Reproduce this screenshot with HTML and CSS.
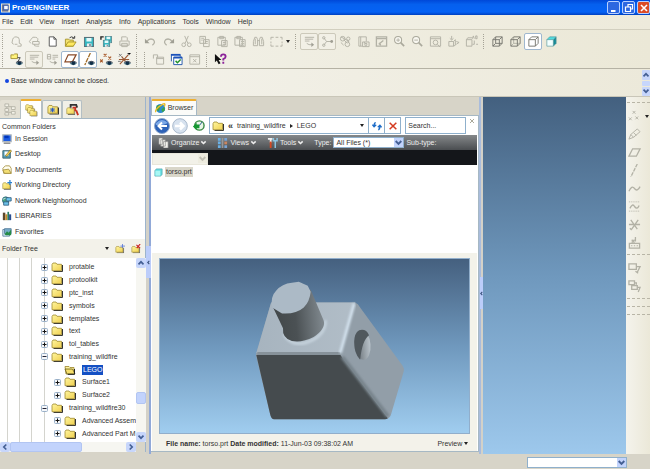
FILE: index.html
```
<!DOCTYPE html>
<html lang="en">
<head>
<meta charset="utf-8">
<title>Pro/ENGINEER</title>
<link rel="stylesheet" href="styles.css">
</head>
<body>
<svg class="defs" aria-hidden="true">
  <defs>
    <linearGradient id="gold" x1="0" y1="0" x2="1" y2="1"><stop offset="0" stop-color="#fff6a0"/><stop offset="1" stop-color="#f0d050"/></linearGradient>
    <symbol id="folder" viewBox="0 0 12 10"><path d="M2.5 9.5H11.5V3" fill="none" stroke="#333" stroke-width="1"/><path d="M1 2.5L2 1H5L6 2.3H10.5V8.7H1Z" fill="url(#gold)" stroke="#a08a30" stroke-width=".8"/></symbol>
    <symbol id="folder-open" viewBox="0 0 12 10"><path d="M1 1.5H5L6 2.5H10V9H2Z" fill="#fff3a0" stroke="#99842c" stroke-width=".8"/><path d="M1 4H8.5L11 9H3Z" fill="#f6df6c" stroke="#665818" stroke-width=".8"/><path d="M10.5 4V9.3H4" fill="none" stroke="#222"/></symbol>
    <symbol id="plus" viewBox="0 0 7 7"><rect x=".5" y=".5" width="6" height="6" rx="1" fill="#f5f7fa" stroke="#9ab0c8"/><path d="M1.5 3.5H5.5M3.5 1.5V5.5" stroke="#111"/></symbol>
    <symbol id="minus" viewBox="0 0 7 7"><rect x=".5" y=".5" width="6" height="6" rx="1" fill="#f5f7fa" stroke="#9ab0c8"/><path d="M1.5 3.5H5.5" stroke="#223"/></symbol>
    <symbol id="chev" viewBox="0 0 8 8"><path d="M1.5 2.7L4 5.2L6.5 2.7" fill="none" stroke="currentColor" stroke-width="1.7"/></symbol>
    <symbol id="eye" viewBox="0 0 7 5"><path d="M0 2.8Q3.5-1.5 7 2.8Q3.5 6 0 2.8Z" fill="#7296a0"/><circle cx="3.6" cy="2.6" r="1.7" fill="#102e48"/><path d="M.3 1.8Q3.5-.8 6.7 1.8" fill="none" stroke="#223" stroke-width=".7"/></symbol>
    <symbol id="mag" viewBox="0 0 14 14"><circle cx="5.5" cy="5.5" r="3.8" fill="#f8f7f0" stroke="#aaa99c" stroke-width="1.1"/><path d="M8.3 8.3L12 12" stroke="#aaa99c" stroke-width="1.8"/></symbol>
    <symbol id="floppy" viewBox="0 0 10 10"><path d="M.5.5H9.5V9.5H.5Z" fill="#36b6c0" stroke="#57727a"/><path d="M2.5 1H7.5V4.5H2.5Z" fill="#e6fafa"/><path d="M3 6.5H7.5V9.5H3Z" fill="#f0f0f0"/><path d="M6 7V9" stroke="#345"/></symbol>
  </defs>
</svg>

<header class="titlebar">
  <svg class="app-icon" viewBox="0 0 10 10"><rect width="10" height="10" fill="#ece7d4"/><rect x="1" y="1" width="7" height="8" fill="#6e7898"/><rect x="3" y="2" width="5" height="5" fill="#f7f8ff" stroke="#3153a6"/></svg>
  <h1>Pro/ENGINEER</h1>
  <div class="win-buttons">
    <button aria-label="Minimize"><svg viewBox="0 0 12 12"><path d="M3 9H7.500" stroke="#fff" stroke-width="2"/></svg></button>
    <button aria-label="Restore"><svg viewBox="0 0 12 12"><path d="M5 4.500V2.500H9.500V7H8M2.500 5H7.500V9.500H2.500Z" fill="none" stroke="#fff" stroke-width="1.200"/></svg></button>
    <button class="close" aria-label="Close"><svg viewBox="0 0 12 12"><path d="M3 3L9 9M9 3L3 9" stroke="#fff" stroke-width="1.600"/></svg></button>
  </div>
</header>

<nav class="menubar">
  <button>File</button><button>Edit</button><button>View</button><button>Insert</button><button>Analysis</button><button>Info</button><button>Applications</button><button>Tools</button><button>Window</button><button>Help</button>
</nav>

<section class="toolbars">
  <div class="toolrow">
    <i class="grip"></i>
    <div class="group">
      <button aria-label="Erase"><svg viewBox="0 0 14 14"><path d="M4 10Q1 9 2.500 6.500Q3 2 6.500 2Q10 2 10 5V9M10 9Q13 9 12 12H8M5 10H8" class="g"/></svg></button>
      <button aria-label="Erase hidden"><svg viewBox="0 0 14 14"><path d="M3 9Q0 7 3 5Q5 1 8 2.500Q12 3 10 7M5 7H12V10H5ZM7 10Q6 12 9 12H12" class="g"/></svg></button>
      <button aria-label="New"><svg viewBox="0 0 14 14"><path d="M3.500 2H8.500L11 4.500V12H3.500ZM8.500 2V4.500H11" fill="#fff" stroke="#555"/></svg></button>
      <button aria-label="Open"><svg viewBox="0 0 14 14"><path d="M1.500 4.500H5L6 5.500H10V12H1.500Z" fill="#f4e370" stroke="#a8942c"/><path d="M1.500 12L4.500 7.500H13L10 12Z" fill="#ffea60" stroke="#a8942c"/><path d="M6 3Q8 1 10.500 3M9 3.500H11.500V1" fill="none" stroke="#333"/></svg></button>
      <button aria-label="Save"><svg viewBox="0 0 14 14"><use href="#floppy" x="2" y="2" width="11" height="11"/></svg></button>
      <button aria-label="Save a copy"><svg viewBox="0 0 14 14"><use href="#floppy" x="5" y="1" width="8" height="8"/><use href="#floppy" x="3" y="5" width="8" height="8"/><path d="M1 5V2H4" fill="none" stroke="#222" stroke-width="1.500"/></svg></button>
      <button aria-label="Print"><svg viewBox="0 0 14 14"><path d="M4 6V2H9L10 3V6M2 6.500H12V11H2ZM4 9H10V12.500H4Z" class="g"/></svg></button>
    </div>
    <i class="grip"></i>
    <div class="group">
      <button aria-label="Undo"><svg viewBox="0 0 14 14"><path d="M3 7Q6 3 10 5Q13 8 9 11" class="g b"/><path d="M1 4V9H6Z" fill="#a09f94"/></svg></button>
      <button aria-label="Redo"><svg viewBox="0 0 14 14"><path d="M11 7Q8 3 4 5Q1 8 5 11" class="g b"/><path d="M13 4V9H8Z" fill="#a09f94"/></svg></button>
      <button aria-label="Cut"><svg viewBox="0 0 14 14"><path d="M5 1L8.500 9M9 1L5.500 9" class="g"/><circle cx="4" cy="10.500" r="2" class="g"/><circle cx="10" cy="10.500" r="2" class="g"/></svg></button>
      <button aria-label="Copy"><svg viewBox="0 0 14 14"><path d="M2 1.500H8V9H2ZM6 5H12V12.500H6ZM7.500 7H10.500M7.500 9H10.500M3.500 3.500H6.500M3.500 5.500H5" class="g"/></svg></button>
      <button aria-label="Paste"><svg viewBox="0 0 14 14"><path d="M2 2.500H10V11H2ZM4 1.500H8V4H4ZM6 6H12V12.500H6ZM7.500 8H10.500M7.500 10H10.500" class="g"/></svg></button>
      <button aria-label="Paste special"><svg viewBox="0 0 14 14"><path d="M1 2.500H9V11H1ZM3 1.500H7V4H3ZM6 5H12V12.500H6ZM7.500 7H8.500M9.500 7H11M7.500 9H8.500M9.500 9H11M7.500 11H11" class="g"/></svg></button>
      <button aria-label="Find"><svg viewBox="0 0 14 14"><path d="M3 2.500H5L6 5V11.500H1.500V7ZM9 2.500H11L12.500 7V11.500H8V5ZM6 6H8M3.500 4V10M10.500 4V10" class="g"/></svg></button>
      <button aria-label="Select"><svg viewBox="0 0 14 14"><path d="M1 5V2.500H4M6 2.500H9M11 2.500H13V5M13 7V9M13 10V12H11M9 12H6M4 12H1V10M1 9V7" class="g"/></svg></button>
      <button class="tiny" aria-label="Select options"><i class="tri"></i></button>
    </div>
    <i class="grip"></i>
    <div class="group">
      <button class="pressed dim" aria-label="Annotations"><svg viewBox="0 0 14 14"><path d="M2 2.500H12M2 4.500H11M2 6.500H7M4 9Q6 11 10 10.500" class="g"/><path d="M9 8L12 10.500L9 13Z" fill="#a09f94"/></svg></button>
      <button class="pressed dim" aria-label="Spin center"><svg viewBox="0 0 14 14"><path d="M3 3L6 7L3 11M6 7H11" class="g"/><circle cx="3" cy="3" r="1.300" class="g"/><circle cx="3" cy="11" r="1.300" class="g"/><circle cx="11.500" cy="7" r="1.500" fill="#a09f94"/></svg></button>
      <button aria-label="Orient mode"><svg viewBox="0 0 14 14"><circle cx="4" cy="4" r="2.500" class="g"/><circle cx="10" cy="4" r="1.800" class="g"/><circle cx="9" cy="10" r="2.500" class="g"/><path d="M2 8L5 11M5 5L9 9M10 6V8M2 2L11 7" class="g"/></svg></button>
      <button aria-label="Layers"><svg viewBox="0 0 14 14"><path d="M2 2H10V7M2 2V12H6M4 2V12M6 7.500H13V12.500H6ZM8 7.500V9H11" class="g"/><circle cx="9.500" cy="10.500" r="1.200" class="g"/></svg></button>
      <button aria-label="Redraw"><svg viewBox="0 0 14 14"><path d="M1.500 2H12.500V12H1.500ZM1.500 4H12.500M4 10L9 6M6 11L5 8" class="g b"/></svg></button>
      <button aria-label="Zoom in"><svg viewBox="0 0 14 14"><use href="#mag" width="14" height="14"/><path d="M3.500 5.500H7.500M5.500 3.500V7.500" class="g"/></svg></button>
      <button aria-label="Zoom out"><svg viewBox="0 0 14 14"><use href="#mag" width="14" height="14"/><path d="M3.500 5.500H7.500" class="g"/></svg></button>
      <button aria-label="Refit"><svg viewBox="0 0 14 14"><path d="M1.500 2H12.500V12H1.500ZM1.500 4H12.500M9 10L12 13" class="g"/><circle cx="7" cy="8" r="2.500" class="g"/></svg></button>
      <button aria-label="Reorient"><svg viewBox="0 0 14 14"><path d="M5 1V5M3 3.500L5 5.500L7 3.500M2 7H7V12H2ZM7 7L9 5M9 5V11L7 12M10 7L13 8L10 10" class="g"/></svg></button>
      <button aria-label="Saved views"><svg viewBox="0 0 14 14"><path d="M1.500 5H7.500V12H1.500ZM1.500 5L3 3H8M8 4L9 1L10 4M11.500 1H13V4H11.500ZM10 6V10H8M12 10H14" class="g"/></svg></button>
    </div>
    <i class="grip"></i>
    <div class="group">
      <button aria-label="Wireframe"><svg viewBox="0 0 14 14"><path d="M2 5H9V12H2ZM5 2H12V9H5ZM2 5L5 2M9 5L12 2M9 12L12 9M2 12L5 9" class="k"/></svg></button>
      <button aria-label="Hidden line"><svg viewBox="0 0 14 14"><path d="M5 2V9H12M2 12L5 9" class="g"/><path d="M2 5H9V12H2ZM2 5L5 2H12V9L9 12M9 5L12 2" class="k"/></svg></button>
      <button class="pressed" aria-label="No hidden"><svg viewBox="0 0 14 14"><path d="M2 5H9V12H2ZM2 5L5 2H12V9L9 12M9 5L12 2" class="k"/></svg></button>
      <button aria-label="Shading"><svg viewBox="0 0 14 14"><path d="M2 5H9V12H2Z" fill="#f2ffff"/><path d="M2 5L5 2H12L9 5Z" fill="#50dce0"/><path d="M9 5L12 2V9L9 12Z" fill="#168b96"/><path d="M2 5H9V12H2ZM2 5L5 2H12V9L9 12M9 5L12 2" fill="none" stroke="#57999d" stroke-width=".7"/></svg></button>
    </div>
  </div>
  <div class="toolrow">
    <i class="grip"></i>
    <div class="group">
      <button aria-label="Layer tree"><svg viewBox="0 0 14 14"><path d="M1 2H4L5 1H8V6H1Z" fill="#fff37b" stroke="#a59336"/><path d="M8 5H11L8 10" fill="none" stroke="#444"/><use href="#eye" x="6" y="8" width="8" height="6"/></svg></button>
      <button class="pressed dim" aria-label="Notes"><svg viewBox="0 0 14 14"><path d="M2 2.500H12M2 4.500H11M2 6.500H7M4 9Q6 11 10 10.500" class="g"/><path d="M9 8L12 10.500L9 13Z" fill="#a09f94"/></svg></button>
      <button aria-label="Tags"><svg viewBox="0 0 14 14"><path d="M1.500 1.500H5V6.500H1.500ZM1.500 4H5M7 2.500H13M7 4.500H13M7 6.500H10M4 9Q6 11 10 10.500" class="g"/><path d="M9 8L12 10.500L9 13Z" fill="#a09f94"/></svg></button>
      <button class="pressed" aria-label="Datum planes"><svg viewBox="0 0 14 14"><path d="M4.500 2H13L9 9.500H1Z" fill="none" stroke="#8a4b28" stroke-width="1.300"/><use href="#eye" x="6" y="8" width="8" height="6"/></svg></button>
      <button class="pressed" aria-label="Datum axes"><svg viewBox="0 0 14 14"><path d="M9 0L3 13" stroke="#a16c27" stroke-width="1.400" stroke-dasharray="5 1"/><use href="#eye" x="6" y="8" width="8" height="6"/></svg></button>
      <button aria-label="Datum points"><svg viewBox="0 0 14 14"><path d="M4 1L7 4M7 1L4 4M0 7L3 10M3 7L0 10M9 4L12 7M12 4L9 7" stroke="#a85a2a" stroke-width="1.200"/><use href="#eye" x="6" y="8" width="8" height="6"/></svg></button>
      <button aria-label="Coordinate systems"><svg viewBox="0 0 14 14"><path d="M1 7H12M2 12L11 2M4 4L8 9" stroke="#9b5732" stroke-width="1.200"/><path d="M1 1L4 4M4 1L1 4M10 0L12 2L14 0M0 9H3" stroke="#777"/><use href="#eye" x="6" y="8" width="8" height="6"/></svg></button>
    </div>
    <i class="grip"></i><i class="grip"></i>
    <div class="group">
      <button aria-label="New window"><svg viewBox="0 0 14 14"><path d="M1.500 6V2H6V5M5 4.500H12.500V12H5ZM5 6H12.500" class="g"/></svg></button>
      <button aria-label="Activate window"><svg viewBox="0 0 14 14"><path d="M1.500 9V1.500H11V4M4 4.500H13V12.500H4Z" fill="#fff" stroke="#2255aa"/><path d="M1 2H11M4 5H13" stroke="#1b52ba" stroke-width="2"/><path d="M6 8.500L8 10.500L11.500 7" fill="none" stroke="#24932c" stroke-width="1.600"/></svg></button>
      <button aria-label="Close window"><svg viewBox="0 0 14 14"><path d="M2 2H12.500V12H2ZM2 4H12.500M5.500 6.500L9 10M9 6.500L5.500 10" class="g"/></svg></button>
    </div>
    <i class="grip"></i>
    <div class="group">
      <button aria-label="Context help"><svg viewBox="0 0 14 14"><path d="M1 1V10L3 8L5 12L7 11L5 7.500H8Z" fill="#111"/><path d="M7.500 4Q7.500 1.500 10 1.500Q12.500 1.500 12.500 4Q12.500 5.500 10 6.500V8M10 9.500V11.500" fill="none" stroke="#8b2399" stroke-width="2"/></svg></button>
    </div>
  </div>
</section>

<section class="message">
  <p><i></i>Base window cannot be closed.</p>
  <div class="spin">
    <button aria-label="Scroll up"><svg class="flip" viewBox="0 0 8 8"><use href="#chev"/></svg></button>
    <i></i>
    <button aria-label="Scroll down"><svg viewBox="0 0 8 8"><use href="#chev"/></svg></button>
  </div>
</section>

<main class="workspace">
  <aside class="navigator">
    <div class="tabs">
      <button aria-label="Model tree" class="off"><svg viewBox="0 0 14 14"><path d="M3 2V12M3 4H9M3 10H9" class="g"/><path d="M1 1H5V4H1ZM1 6H5V9H1ZM1 10.500H5V13H1ZM8 4H12V7H8ZM8 9H12V12H8Z" fill="#f4f2e8" stroke="#b5b4a9"/></svg></button>
      <button aria-label="Folder browser" class="active"><svg viewBox="0 0 14 14"><use href="#folder" width="9" height="7.500"/><use href="#folder" x="2" y="3" width="9" height="7.500"/><use href="#folder" x="4.500" y="6" width="9" height="7.500"/></svg></button>
      <button aria-label="Favorites"><svg viewBox="0 0 14 14"><use href="#folder" x="1" y="1" width="13" height="12"/><path d="M7 5V10M4.500 7.500H9.500M5 5.500L9 9.500M9 5.500L5 9.500" stroke="#2455c4"/></svg></button>
      <button aria-label="Connections"><svg viewBox="0 0 14 14"><use href="#folder" y="4" width="10" height="9"/><path d="M4 2H11L12 5M5 2V5" fill="none" stroke="#333" stroke-width="2"/><path d="M7 5H10V9M11 8L13 13" stroke="#c93020" fill="none" stroke-width="2"/></svg></button>
    </div>
    <div class="common">
      <h2>Common Folders</h2>
      <ul>
        <li><svg viewBox="0 0 12 12"><path d="M1 1H11V9H1Z" fill="#1b5ce4" stroke="#aeb6bd" stroke-width="1.500"/><path d="M3 2H8V5H3Z" fill="#0034ba"/><path d="M2 11H10" stroke="#777" stroke-width="1.500"/></svg><a href="#">In Session</a></li>
        <li><svg viewBox="0 0 12 12"><path d="M1 2H10V11H1Z" fill="#539db8" stroke="#345d68"/><path d="M3 3H8V8H3Z" fill="#fff"/><path d="M4 8L10 1L11.500 2.500L6 9Z" fill="#efcf50" stroke="#6d5b23" stroke-width=".7"/></svg><a href="#">Desktop</a></li>
        <li><svg viewBox="0 0 12 12"><path d="M1 4L4 1H9L11 4V10H2Z" fill="#fffef0" stroke="#a48e3d"/><path d="M1 6L8 5L11 10H3Z" fill="#f3df75" stroke="#a48e3d"/></svg><a href="#">My Documents</a></li>
        <li><svg viewBox="0 0 12 12"><use href="#folder" y="2" width="11" height="10"/><path d="M9.500 0V6M6.500 3H12" stroke="#2880d0" stroke-width="1.500"/></svg><a href="#">Working Directory</a></li>
        <li><svg viewBox="0 0 12 12"><circle cx="4.500" cy="5" r="4" fill="#4ba77c" stroke="#326a88"/><path d="M1 4Q4 1 7 5" fill="none" stroke="#d6ecf8"/><path d="M5 2H11V6H5ZM2 7H8V11H2Z" fill="#6bc3eb" stroke="#315b7e"/></svg><a href="#">Network Neighborhood</a></li>
        <li><svg viewBox="0 0 12 12"><path d="M1 2H4V11H1Z" fill="#5b482d"/><path d="M4 4H6.500V11H4Z" fill="#c78b2b"/><path d="M6.500 1H8.500V11H6.500Z" fill="#2b7b61"/><path d="M8.500 4H11V11H8.500Z" fill="#294d92"/></svg><a href="#">LIBRARIES</a></li>
        <li><svg viewBox="0 0 12 12"><path d="M1 3H9V11H1Z" fill="#d9eef5" stroke="#567b9a"/><path d="M3 2H11V8H3Z" fill="#76abc9" stroke="#567b9a"/><path d="M3 9L6 5L8 7L11 3V10H5Z" fill="#258c46"/></svg><a href="#">Favorites</a></li>
      </ul>
    </div>
    <div class="treehead">
      <h2>Folder Tree</h2>
      <button aria-label="Tree options"><i class="tri"></i></button>
      <button aria-label="New folder"><svg viewBox="0 0 12 12"><use href="#folder" y="2" width="11" height="9"/><path d="M9 0V5M6.500 2.500H12" stroke="#5a7ad8"/></svg></button>
      <button aria-label="Delete folder"><svg viewBox="0 0 12 12"><use href="#folder" y="2" width="11" height="9"/><path d="M6.500 1L11 5M11 0L7 5" stroke="#cc2222" stroke-width="1.400"/></svg></button>
    </div>
    <div class="treebox">
      <ul class="tree">
        <li><svg class="ex"><use href="#plus"/></svg><svg class="fo"><use href="#folder"/></svg><span>protable</span></li>
        <li><svg class="ex"><use href="#plus"/></svg><svg class="fo"><use href="#folder"/></svg><span>protoolkit</span></li>
        <li><svg class="ex"><use href="#plus"/></svg><svg class="fo"><use href="#folder"/></svg><span>ptc_inst</span></li>
        <li><svg class="ex"><use href="#plus"/></svg><svg class="fo"><use href="#folder"/></svg><span>symbols</span></li>
        <li><svg class="ex"><use href="#plus"/></svg><svg class="fo"><use href="#folder"/></svg><span>templates</span></li>
        <li><svg class="ex"><use href="#plus"/></svg><svg class="fo"><use href="#folder"/></svg><span>text</span></li>
        <li><svg class="ex"><use href="#plus"/></svg><svg class="fo"><use href="#folder"/></svg><span>tol_tables</span></li>
        <li><svg class="ex"><use href="#minus"/></svg><svg class="fo"><use href="#folder"/></svg><span>training_wildfire</span></li>
        <li class="sub"><i class="ex"></i><svg class="fo"><use href="#folder-open"/></svg><span class="selected">LEGO</span></li>
        <li class="sub"><svg class="ex"><use href="#plus"/></svg><svg class="fo"><use href="#folder"/></svg><span>Surface1</span></li>
        <li class="sub"><svg class="ex"><use href="#plus"/></svg><svg class="fo"><use href="#folder"/></svg><span>Surface2</span></li>
        <li><svg class="ex"><use href="#minus"/></svg><svg class="fo"><use href="#folder"/></svg><span>training_wildfire30</span></li>
        <li class="sub"><svg class="ex"><use href="#plus"/></svg><svg class="fo"><use href="#folder"/></svg><span>Advanced Assem</span></li>
        <li class="sub"><svg class="ex"><use href="#plus"/></svg><svg class="fo"><use href="#folder"/></svg><span>Advanced Part M</span></li>
      </ul>
      <div class="vscroll">
        <button aria-label="Tree up"><svg class="flip" viewBox="0 0 8 8"><use href="#chev"/></svg></button>
        <i class="thumb"></i>
        <button aria-label="Tree down"><svg viewBox="0 0 8 8"><use href="#chev"/></svg></button>
      </div>
      <div class="hscroll">
        <button aria-label="Tree left"><svg class="left" viewBox="0 0 8 8"><use href="#chev"/></svg></button>
        <i class="thumb"></i>
        <button aria-label="Tree right"><svg class="right" viewBox="0 0 8 8"><use href="#chev"/></svg></button>
      </div>
    </div>
  </aside>

  <div class="sash"><button aria-label="Collapse navigator"><svg class="left" viewBox="0 0 8 8"><use href="#chev"/></svg></button></div>

  <section class="browser">
    <div class="browser-tabs">
      <button><svg viewBox="0 0 12 12"><circle cx="6" cy="6" r="5" fill="#2b8bd0"/><path d="M2 3Q5 1 6 4L4 9Q0 8 2 3ZM7 7L10 4L11 8L8 10Z" fill="#3ca14c"/><path d="M1 10Q-1 7 9 1Q12 0 10 4" fill="none" stroke="#e8bb28" stroke-width="1.500"/></svg>Browser</button>
    </div>
    <div class="frame">
      <div class="address">
        <button class="nav" aria-label="Back"><svg viewBox="0 0 16 16"><circle cx="8" cy="8" r="7.500" fill="#2d62b8" stroke="#90a8cc"/><path d="M2 5Q8-1 14 5Q8 8 2 7Z" fill="#7ba7e6"/><path d="M13 8H5M8 4.500L4.500 8L8 11.500" fill="none" stroke="#fff" stroke-width="2"/></svg></button>
        <button class="nav" aria-label="Forward"><svg viewBox="0 0 16 16"><circle cx="8" cy="8" r="7.300" fill="#d7e2ef" stroke="#a9b9cc"/><path d="M3 8H11M8 4.500L11.500 8L8 11.500" fill="none" stroke="#fff" stroke-width="2.500"/></svg></button>
        <button class="hist" aria-label="History"><svg viewBox="0 0 14 14"><circle cx="8" cy="7" r="5" fill="#e9f6e7" stroke="#388944" stroke-width="1.500"/><path d="M1 8L5 4V6H8V10H5V12Z" fill="#159830"/><path d="M8 7L11 3" stroke="#225588"/></svg></button>
        <div class="path">
          <svg class="fo"><use href="#folder"/></svg>
          <span class="back">«</span><span>training_wildfire</span><i class="play"></i><span>LEGO</span>
          <button class="drop" aria-label="Recent folders"><i class="tri"></i></button>
          <button class="act" aria-label="Refresh"><svg viewBox="0 0 12 12"><path d="M4.500 2Q2.500 2 2.500 6M.500 4.500L2.500 7L5 4.500M7.500 10.500Q9.500 10 9.500 6M7 7.500L9.500 5L11.500 7.500" fill="none" stroke="#1d6cc8" stroke-width="1.600"/></svg></button>
          <button class="act" aria-label="Stop"><svg viewBox="0 0 12 12"><path d="M2 2L10 10M10 2L2 10" stroke="#d43a20" stroke-width="1.800"/></svg></button>
        </div>
        <input class="search" type="text" value="Search..." aria-label="Search">
        <button class="x" aria-label="Close browser"><svg viewBox="0 0 8 8"><path d="M2 2L6 6M6 2L2 6" stroke="#aaa99b"/></svg></button>
      </div>
      <div class="commands">
        <button><svg class="ci" viewBox="0 0 12 12"><path d="M1 1H5V8H1ZM3 3H8V10H3ZM6 5H11V12H6Z" fill="#f2f2ed" stroke="#888" stroke-width=".7"/></svg>Organize<svg class="cv" viewBox="0 0 8 8"><use href="#chev"/></svg></button>
        <button><svg class="ci" viewBox="0 0 12 12"><path d="M1 1H4V4H1ZM1 5H4V8H1ZM1 9H4V12H1Z" fill="#6ab0e4"/><path d="M5 1H7V12H5Z" fill="#999"/><path d="M8 1H11V4H8ZM8 9H11V12H8Z" fill="#78a4d4"/><path d="M8 5H11V8H8Z" fill="#ca8660"/></svg>Views<svg class="cv" viewBox="0 0 8 8"><use href="#chev"/></svg></button>
        <button><svg class="ci" viewBox="0 0 12 12"><path d="M1 2H6M4 2V6" stroke="#eee" stroke-width="2"/><path d="M4 5V12" stroke="#d44822" stroke-width="2"/><path d="M7 1V4H11V1M9 4V12" fill="none" stroke="#8bc6e4" stroke-width="1.600"/></svg>Tools<svg class="cv" viewBox="0 0 8 8"><use href="#chev"/></svg></button>
        <label for="type">Type:</label>
        <span class="select"><select id="type"><option>All Files (*)</option></select><svg viewBox="0 0 8 8"><use href="#chev"/></svg></span>
        <label for="subtype">Sub-type:</label>
      </div>
      <div class="subbar"><span class="select flat"><select id="subtype"><option></option></select><svg viewBox="0 0 8 8"><use href="#chev"/></svg></span></div>
      <div class="files">
        <button><svg viewBox="0 0 10 10"><path d="M1 3L2.500 1H9V7L7.500 9H1Z" fill="#63dce2" stroke="#55a8ae" stroke-width=".8"/><path d="M1.500 3H7V8.500H1.500Z" fill="#a9f7f4"/></svg><span>torso.prt</span></button>
      </div>
      <div class="preview">
        <div class="view">
          <svg viewBox="0 0 310 176" role="img" aria-label="torso.prt model">
            <defs>
              <linearGradient id="cyl" x1="0" x2="1" y1=".1" y2="0"><stop offset="0" stop-color="#42484a"/><stop offset=".4" stop-color="#4b5154"/><stop offset="1" stop-color="#879096"/></linearGradient>
              <linearGradient id="top" x1="0" x2="1"><stop offset="0" stop-color="#a7b4bf"/><stop offset="1" stop-color="#b1bdc7"/></linearGradient>
              <linearGradient id="hole" x1="0" x2="1"><stop offset="0" stop-color="#626a70"/><stop offset="1" stop-color="#bac4cb"/></linearGradient>
              <filter id="soft"><feGaussianBlur stdDeviation="1"/></filter>
            </defs>
            <path d="M111 44H196Q199 45 201 49L244 108Q246 111 245 114L232 158Q230 162 226 162H114Q111 162 110 157L96 99Q95 96 97 92Z" fill="#929ea8"/>
            <path d="M96 95L111 44H196L181 96Z" fill="url(#top)"/>
            <path d="M96 97H181L229 161Q228 162 226 162H114Q111 162 110 157Z" fill="#454b4e"/>
            <path d="M97 95.500H181" stroke="#87929a" stroke-width="3"/>
            <path d="M183 99L229 159" stroke="#78848c" stroke-width="4" filter="url(#soft)"/>
            <path d="M195 45L181 95" stroke="#d1e0ec" stroke-width="3" filter="url(#soft)"/>
            <path d="M124 76Q130 88 145 85Q166 79 166 62" fill="none" stroke="#c5d2dc" stroke-width="3" filter="url(#soft)"/>
            <path d="M112 47L123 70Q122 80 132 83Q142 85 154 79Q167 70 164 62L151 31Z" fill="url(#cyl)"/>
            <path d="M112 49Q110 38 116 32Q122 25 132 24L139 23L148 27L151 33Q150 43 144 49Q136 56 122 55Z" fill="#acbac6"/>
            <ellipse cx="203.500" cy="87" rx="8" ry="15" fill="url(#hole)" transform="rotate(-5 203.500 87)"/>
            <path d="M200 72Q207 70 210 77Q203 82 201 102Q195 96 195 84Q195 75 200 72Z" fill="#50585d"/>
          </svg>
        </div>
        <footer>
          <p><b>File name:</b> torso.prt <b>Date modified:</b> 11-Jun-03 09:38:02 AM</p>
          <button>Preview<i class="tri"></i></button>
        </footer>
      </div>
    </div>
  </section>

  <div class="sash thin"><button aria-label="Collapse browser"><svg class="left" viewBox="0 0 8 8"><use href="#chev"/></svg></button></div>
  <section class="canvas" aria-label="Graphics window"></section>

  <aside class="features">
    <hr>
    <button aria-label="Datum point"><svg viewBox="0 0 14 14"><path d="M5 1L8 4M8 1L5 4M1 8L4 11M4 8L1 11M8 7L11 10M11 7L8 10" class="g"/></svg><i class="tri"></i></button>
    <button aria-label="Sketch"><svg viewBox="0 0 14 14"><path d="M1 12L3 7L10 1L13 4L6 10ZM3 7L6 10M6 5L9 8" class="g"/></svg></button>
    <button aria-label="Plane"><svg viewBox="0 0 14 14"><path d="M5 3H13L9 11H1Z" class="g b"/></svg></button>
    <button aria-label="Axis"><svg viewBox="0 0 14 14"><path d="M10 0L3 14" class="g b" stroke-dasharray="4 1"/></svg></button>
    <button aria-label="Curve"><svg viewBox="0 0 14 14"><path d="M1 10Q4 3 7 7Q10 11 13 5" class="g b"/></svg></button>
    <button aria-label="Sketched curve"><svg viewBox="0 0 14 14"><path d="M2 9Q5 3 7 7Q10 11 12 6" class="g b"/><path d="M1 2H13M1 12H13" class="g" stroke-dasharray="1 1"/></svg></button>
    <button aria-label="Coordinate system"><svg viewBox="0 0 14 14"><path d="M1 7H13M3 2L10 12M11 2L4 12M2 11L4 13" class="g b"/></svg></button>
    <button aria-label="Analysis feature"><svg viewBox="0 0 14 14"><path d="M1.500 8H12.500V13H1.500ZM4 10V11M7 10V11M10 10V11M4 4L7 7M7 4L4 7M8 1V6" class="g b"/></svg></button>
    <hr>
    <button aria-label="Annotation"><svg viewBox="0 0 14 14"><path d="M1 2H9V8H1ZM9 5H13L10 11M8 10L11 12" class="g b"/></svg></button>
    <button aria-label="Annotation set"><svg viewBox="0 0 14 14"><path d="M1 1H7V5H1ZM4 6H10V10H4ZM7 3H9V5M10 8H13L11 13" class="g b"/></svg></button>
    <hr><hr><hr>
  </aside>
</main>

<footer class="status">
  <span class="select"><select aria-label="Selection filter"><option></option></select><svg viewBox="0 0 8 8"><use href="#chev"/></svg></span>
</footer>
</body>
</html>
```

FILE: styles.css
```
* { box-sizing: border-box; }

body {
  margin: 0;
  min-height: 100vh;
  display: flex;
  flex-direction: column;
  background: #d7d4c8;
  color: #333;
  font: 7px/10px "Liberation Sans", Arial, sans-serif;
}

button, input, select {
  margin: 0;
  padding: 0;
  border: 0;
  background: none;
  color: inherit;
  font: inherit;
}

button {
  display: flex;
  align-items: center;
  justify-content: center;
}

h1, h2, p, ul { margin: 0; padding: 0; font-size: 7px; font-weight: normal; }
ul { list-style: none; }
svg { display: block; flex: none; }
.defs { position: absolute; width: 0; height: 0; }
.g { fill: none; stroke: #b2b1a5; stroke-width: 1; }
.b { stroke-width: 1.4; }
.k { fill: none; stroke: #77776f; stroke-width: 1; }
.flip { transform: rotate(180deg); }
.left { transform: rotate(90deg); }
.right { transform: rotate(270deg); }

.tri {
  border: 2px solid transparent;
  border-top: 3px solid #222;
  border-bottom: 0;
}

/* Window chrome */
.titlebar {
  display: flex;
  align-items: center;
  gap: 2px;
  height: 15px;
  padding-left: 1px;
  background: linear-gradient(#0048d8, #0560ee 30%, #0562f5 80%, #0040c0);
}
.app-icon { width: 9px; height: 10px; }
.titlebar h1 { color: #fff; font-size: 8px; font-weight: bold; }
.win-buttons { display: flex; gap: 2px; margin-left: auto; }
.win-buttons button {
  width: 13px;
  height: 13px;
  border: 1px solid #b8d0ff;
  border-radius: 2px;
  background: #2c67e0;
}
.win-buttons .close { background: #dc4b24; }
.win-buttons svg { width: 12px; height: 12px; }

.menubar {
  display: flex;
  gap: 7px;
  height: 15px;
  padding-left: 2px;
  background: linear-gradient(90deg, #f6f5ee, #edeadb);
  border-bottom: 1px solid #d2cfbf;
}

.toolbars {
  height: 39px;
  padding: 2px 0;
  background: linear-gradient(90deg, #f4f3ec, #ebe8d7);
  border-bottom: 1px solid #b5b2a4;
}
.toolrow { display: flex; align-items: center; height: 18px; padding-left: 1px; }
.group { display: flex; margin-right: 2px; }
.group button { width: 18px; height: 17px; }
.group svg { width: 13px; height: 13px; }
.group .tiny { width: 5px; margin-right: 2px; }
.pressed { border: 1px solid #9fb7cf; border-radius: 2px; background: #fff; }
.pressed.dim { border-color: #ccc9ba; background: #f2f0e6; }
.grip { width: 1px; height: 15px; margin: 0 4px 0 1px; border-left: 1px dotted #a5a296; }
.grip + .grip { margin-left: 3px; }

.message {
  display: flex;
  justify-content: space-between;
  height: 28px;
  background: linear-gradient(90deg, #f5f4ee, #ece9da);
  border-bottom: 1px solid #c9c6b8;
}
.message p { display: flex; align-items: center; gap: 2px; padding-left: 5px; height: 24px; }
.message p i { width: 4px; height: 4px; border-radius: 50%; background: #1445e0; }
.spin { display: flex; flex-direction: column; gap: 1px; width: 8px; padding-top: 1px; color: #445f94; }
.spin > * { flex: 1; background: #c7d6fb; border-radius: 1px; }
.spin i { flex: 0 0 5px; }
.spin svg { width: 8px; height: 8px; }

.workspace { flex: 1; display: flex; }

/* Navigator */
.navigator {
  display: flex;
  flex-direction: column;
  width: 146px;
  margin-bottom: 2px;
  padding-top: 2px;
  border-right: 1px solid #9db4cc;
}
.tabs { display: flex; height: 20px; align-items: flex-end; border-bottom: 1px solid #a6b8c4; }
.tabs button {
  width: 20px;
  height: 18px;
  border: 1px solid #b4bfc4;
  border-bottom: 0;
  border-radius: 2px 2px 0 0;
  background: #f1f0e8;
}
.tabs .off { border-color: transparent; background: #e3e0d4; }
.tabs .active { width: 22px; height: 20px; margin-bottom: -1px; border-top: 2px solid #edae31; background: #fff; }
.tabs svg { width: 13px; height: 13px; }
.common { padding: 2px 2px 0; background: #fff; height: 120px; }
.common h2 { line-height: 11px; }
.common ul { display: flex; flex-direction: column; justify-content: space-between; height: 106px; }
.common li { display: flex; align-items: center; gap: 3px; height: 13px; }
.common li svg { width: 10px; height: 10px; }
.common a { color: inherit; text-decoration: none; }
.treehead { display: flex; align-items: center; gap: 6px; height: 19px; padding: 0 4px 0 2px; background: #f3f2ea; }
.treehead h2 { flex: 1; }
.treehead svg { width: 10px; height: 10px; }

.treebox { flex: 1; display: grid; grid-template: 1fr 10px / 1fr 11px; background: #d8d5c8; }
.tree {
  display: grid;
  grid-auto-rows: 1fr;
  padding: 3px 0 2px 41px;
  background:
    linear-gradient(#d4d4ce, #d4d4ce) 7px 0 / 1px 100% no-repeat,
    linear-gradient(#d4d4ce, #d4d4ce) 19px 0 / 1px 100% no-repeat,
    linear-gradient(#d4d4ce, #d4d4ce) 31px 0 / 1px 100% no-repeat,
    linear-gradient(#d4d4ce, #d4d4ce) 44px 0 / 1px 100% no-repeat,
    #fff;
}
.tree li { display: flex; align-items: center; white-space: nowrap; }
.tree .sub { padding-left: 13px; }
.ex { flex: none; width: 7px; height: 7px; margin-right: 3px; }
.fo { width: 12px; height: 10px; }
.tree .fo { margin-right: 6px; }
.tree .selected { padding: 0 1px; background: #1450c4; color: #fff; }
.vscroll, .hscroll { display: flex; background: #f6f6f1; color: #445f94; }
.vscroll { flex-direction: column; }
.vscroll button, .hscroll button { width: 10px; height: 10px; border-radius: 2px; background: #c7d6fb; }
.vscroll svg, .hscroll svg { width: 8px; height: 8px; }
.thumb { border-radius: 2px; background: #c2d3fc; border: 1px solid #b2c5f2; }
.vscroll .thumb { width: 10px; height: 12px; margin: auto 0 28px; }
.hscroll .thumb { flex: 0 0 72px; }
.hscroll button:last-child { margin-left: auto; }

.sash { display: flex; flex-direction: column; width: 5px; background: #d3d1c8; border-right: 2px solid #91a9d8; }
.sash button { width: 5px; height: 32px; margin-top: 149px; background: #bccdfa; color: #39517d; }
.sash svg { width: 5px; height: 5px; }
.sash.thin { width: 4px; border-right: 0; border-left: 2px solid #a9bcdc; }
.sash.thin button { width: 3px; margin-top: 180px; margin-left: -1px; }

/* Browser */
.browser { display: flex; flex-direction: column; flex: 329 1 0; min-width: 0; margin-bottom: 2px; padding-top: 2px; }
.browser-tabs { height: 16px; }
.browser-tabs button {
  gap: 2px;
  height: 16px;
  width: 46px;
  border: 1px solid #a6b8c4;
  border-top: 2px solid #edae31;
  border-bottom: 0;
  border-radius: 2px 2px 0 0;
  background: #fbfbf8;
}
.browser-tabs svg { width: 11px; height: 11px; }
.frame { flex: 1; display: flex; flex-direction: column; border: 1px solid #a6b8c4; border-left: 0; padding: 0 1px; background: #fff; }
.address { display: flex; align-items: center; height: 19px; }
.nav svg { width: 16px; height: 16px; }
.nav { margin-left: 1px; width: 17px; }
.hist { margin: 0 4px; }
.hist svg { width: 13px; height: 13px; }
.path { flex: 1; display: flex; align-items: center; gap: 4px; height: 17px; padding-left: 2px; border: 1px solid #8fb0cc; }
.path .back { font-size: 9px; font-weight: bold; }
.play { border: 2px solid transparent; border-left: 3px solid #222; border-right: 0; }
.drop { margin-left: auto; }
.act { width: 16px; height: 15px; border-left: 1px solid #8fb0cc; margin-right: -4px; }
.act:last-child { margin-right: 0; }
.act svg { width: 10px; height: 10px; }
.search { width: 61px; height: 17px; margin-left: 4px; padding: 0 2px; border: 1px solid #8fb0cc; background: #fff; }
.x { width: 11px; height: 17px; align-items: flex-start; }
.x svg { width: 8px; height: 8px; }

.commands {
  display: flex;
  align-items: center;
  height: 15px;
  padding-left: 6px;
  background: linear-gradient(#85888a, #4a4d50);
  color: #eee;
}
.commands .ci { width: 11px; height: 11px; margin-right: 2px; }
.commands .cv { width: 7px; height: 7px; margin-left: 1px; }
.commands button { margin-right: 10px; }
.select { position: relative; display: flex; height: 11px; }
.select select { appearance: none; width: 100%; padding: 0 2px; border: 1px solid #8fb0cc; background: #fff; color: #333; }
.select svg { position: absolute; top: 1px; right: 1px; width: 9px; height: 9px; background: #c2d3fc; color: #445f94; pointer-events: none; }
.commands .select { width: 71px; margin: 0 2px; }
.subbar { height: 15px; padding-top: 3px; background: #14161a; }
.select.flat { width: 56px; height: 12px; }
.flat select { border-color: #e8e6da; background: #f2f1e8; }
.flat svg { background: #eeecdf; color: #c2c0b4; }
.files { height: 88px; padding: 2px; }
.files button { gap: 2px; }
.files svg { width: 9px; height: 9px; }
.files span { padding: 0 1px; background: #d9d6c9; }

.preview { flex: 1; display: flex; flex-direction: column; padding: 5px 7px 0; background: #f3f2ea; }
.view { flex: 1; min-height: 120px; contain: size; border: 1px solid #91aecb; background: linear-gradient(#45607f, #6f98bd 50%, #a0cdef); }
.view svg { width: 100%; height: 100%; }
.preview footer { display: flex; align-items: center; justify-content: space-between; height: 17px; padding: 2px 2px 0 7px; }
.preview footer button { gap: 2px; }

.canvas { flex: 143 1 0; background: linear-gradient(#43607f, #6f98bd 50%, #9dc8ec); }

.features { display: flex; flex-direction: column; width: 24px; padding: 2px 0 0 1px; background: linear-gradient(90deg, #f4f3ec, #ebe8d8); }
.features hr { width: 100%; margin: 3px 0 4px; border: 0; border-top: 1px dashed #b8b5a6; }
.features button { justify-content: flex-start; gap: 4px; height: 18px; padding-left: 1px; }
.features svg { width: 13px; height: 13px; }

.status { display: flex; justify-content: flex-end; height: 15px; padding: 3px 23px 0 0; }
.status .select { width: 100px; height: 11px; }
```
